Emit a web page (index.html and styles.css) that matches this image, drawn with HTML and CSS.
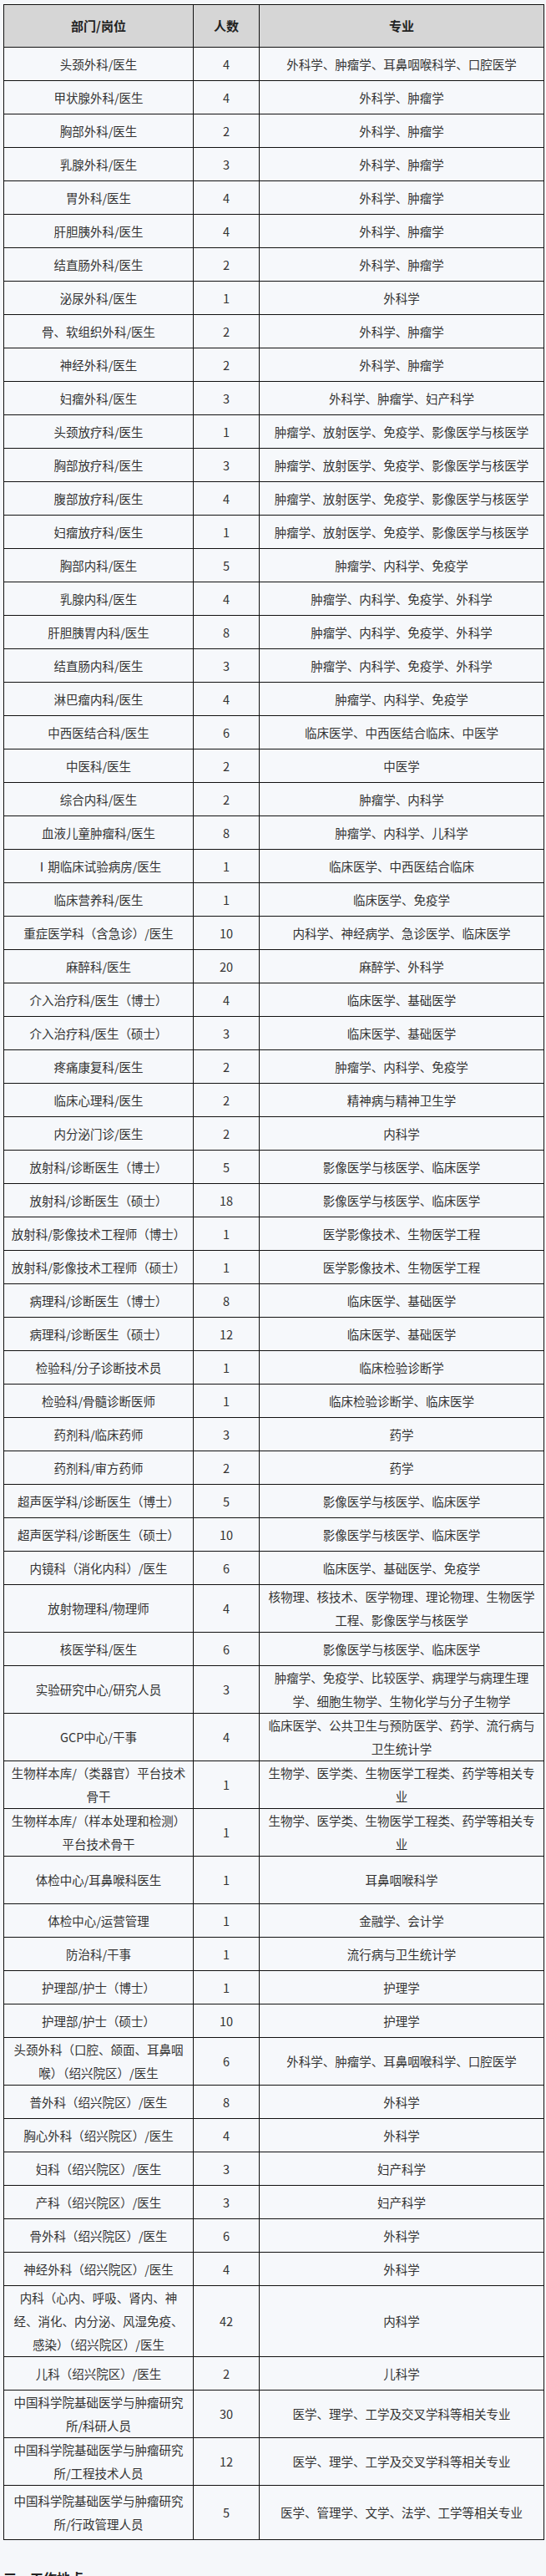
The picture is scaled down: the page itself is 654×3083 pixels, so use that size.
FILE: index.html
```html
<!DOCTYPE html>
<html lang="zh-CN">
<head>
<meta charset="utf-8">
<title>招聘岗位</title>
<link rel="stylesheet" href="styles.css">
</head>
<body>
<div class="page">
<table class="jobs">
<colgroup><col class="c1"><col class="c2"><col class="c3"></colgroup>
<thead>
<tr><th>部门/岗位</th><th>人数</th><th>专业</th></tr>
</thead>
<tbody>
<tr><td>头颈外科/医生</td><td>4</td><td>外科学、肿瘤学、耳鼻咽喉科学、口腔医学</td></tr>
<tr><td>甲状腺外科/医生</td><td>4</td><td>外科学、肿瘤学</td></tr>
<tr><td>胸部外科/医生</td><td>2</td><td>外科学、肿瘤学</td></tr>
<tr><td>乳腺外科/医生</td><td>3</td><td>外科学、肿瘤学</td></tr>
<tr><td>胃外科/医生</td><td>4</td><td>外科学、肿瘤学</td></tr>
<tr><td>肝胆胰外科/医生</td><td>4</td><td>外科学、肿瘤学</td></tr>
<tr><td>结直肠外科/医生</td><td>2</td><td>外科学、肿瘤学</td></tr>
<tr><td>泌尿外科/医生</td><td>1</td><td>外科学</td></tr>
<tr><td>骨、软组织外科/医生</td><td>2</td><td>外科学、肿瘤学</td></tr>
<tr><td>神经外科/医生</td><td>2</td><td>外科学、肿瘤学</td></tr>
<tr><td>妇瘤外科/医生</td><td>3</td><td>外科学、肿瘤学、妇产科学</td></tr>
<tr><td>头颈放疗科/医生</td><td>1</td><td>肿瘤学、放射医学、免疫学、影像医学与核医学</td></tr>
<tr><td>胸部放疗科/医生</td><td>3</td><td>肿瘤学、放射医学、免疫学、影像医学与核医学</td></tr>
<tr><td>腹部放疗科/医生</td><td>4</td><td>肿瘤学、放射医学、免疫学、影像医学与核医学</td></tr>
<tr><td>妇瘤放疗科/医生</td><td>1</td><td>肿瘤学、放射医学、免疫学、影像医学与核医学</td></tr>
<tr><td>胸部内科/医生</td><td>5</td><td>肿瘤学、内科学、免疫学</td></tr>
<tr><td>乳腺内科/医生</td><td>4</td><td>肿瘤学、内科学、免疫学、外科学</td></tr>
<tr><td>肝胆胰胃内科/医生</td><td>8</td><td>肿瘤学、内科学、免疫学、外科学</td></tr>
<tr><td>结直肠内科/医生</td><td>3</td><td>肿瘤学、内科学、免疫学、外科学</td></tr>
<tr><td>淋巴瘤内科/医生</td><td>4</td><td>肿瘤学、内科学、免疫学</td></tr>
<tr><td>中西医结合科/医生</td><td>6</td><td>临床医学、中西医结合临床、中医学</td></tr>
<tr><td>中医科/医生</td><td>2</td><td>中医学</td></tr>
<tr><td>综合内科/医生</td><td>2</td><td>肿瘤学、内科学</td></tr>
<tr><td>血液儿童肿瘤科/医生</td><td>8</td><td>肿瘤学、内科学、儿科学</td></tr>
<tr><td>Ⅰ期临床试验病房/医生</td><td>1</td><td>临床医学、中西医结合临床</td></tr>
<tr><td>临床营养科/医生</td><td>1</td><td>临床医学、免疫学</td></tr>
<tr><td>重症医学科（含急诊）/医生</td><td>10</td><td>内科学、神经病学、急诊医学、临床医学</td></tr>
<tr><td>麻醉科/医生</td><td>20</td><td>麻醉学、外科学</td></tr>
<tr><td>介入治疗科/医生（博士）</td><td>4</td><td>临床医学、基础医学</td></tr>
<tr><td>介入治疗科/医生（硕士）</td><td>3</td><td>临床医学、基础医学</td></tr>
<tr><td>疼痛康复科/医生</td><td>2</td><td>肿瘤学、内科学、免疫学</td></tr>
<tr><td>临床心理科/医生</td><td>2</td><td>精神病与精神卫生学</td></tr>
<tr><td>内分泌门诊/医生</td><td>2</td><td>内科学</td></tr>
<tr><td>放射科/诊断医生（博士）</td><td>5</td><td>影像医学与核医学、临床医学</td></tr>
<tr><td>放射科/诊断医生（硕士）</td><td>18</td><td>影像医学与核医学、临床医学</td></tr>
<tr><td>放射科/影像技术工程师（博士）</td><td>1</td><td>医学影像技术、生物医学工程</td></tr>
<tr><td>放射科/影像技术工程师（硕士）</td><td>1</td><td>医学影像技术、生物医学工程</td></tr>
<tr><td>病理科/诊断医生（博士）</td><td>8</td><td>临床医学、基础医学</td></tr>
<tr><td>病理科/诊断医生（硕士）</td><td>12</td><td>临床医学、基础医学</td></tr>
<tr><td>检验科/分子诊断技术员</td><td>1</td><td>临床检验诊断学</td></tr>
<tr><td>检验科/骨髓诊断医师</td><td>1</td><td>临床检验诊断学、临床医学</td></tr>
<tr><td>药剂科/临床药师</td><td>3</td><td>药学</td></tr>
<tr><td>药剂科/审方药师</td><td>2</td><td>药学</td></tr>
<tr><td>超声医学科/诊断医生（博士）</td><td>5</td><td>影像医学与核医学、临床医学</td></tr>
<tr><td>超声医学科/诊断医生（硕士）</td><td>10</td><td>影像医学与核医学、临床医学</td></tr>
<tr><td>内镜科（消化内科）/医生</td><td>6</td><td>临床医学、基础医学、免疫学</td></tr>
<tr><td>放射物理科/物理师</td><td>4</td><td>核物理、核技术、医学物理、理论物理、生物医学工程、影像医学与核医学</td></tr>
<tr><td>核医学科/医生</td><td>6</td><td>影像医学与核医学、临床医学</td></tr>
<tr><td>实验研究中心/研究人员</td><td>3</td><td>肿瘤学、免疫学、比较医学、病理学与病理生理学、细胞生物学、生物化学与分子生物学</td></tr>
<tr><td>GCP中心/干事</td><td>4</td><td>临床医学、公共卫生与预防医学、药学、流行病与卫生统计学</td></tr>
<tr><td>生物样本库/（类器官）平台技术骨干</td><td>1</td><td>生物学、医学类、生物医学工程类、药学等相关专业</td></tr>
<tr><td>生物样本库/（样本处理和检测）平台技术骨干</td><td>1</td><td>生物学、医学类、生物医学工程类、药学等相关专业</td></tr>
<tr class="tall"><td>体检中心/耳鼻喉科医生</td><td>1</td><td>耳鼻咽喉科学</td></tr>
<tr><td>体检中心/运营管理</td><td>1</td><td>金融学、会计学</td></tr>
<tr><td>防治科/干事</td><td>1</td><td>流行病与卫生统计学</td></tr>
<tr><td>护理部/护士（博士）</td><td>1</td><td>护理学</td></tr>
<tr><td>护理部/护士（硕士）</td><td>10</td><td>护理学</td></tr>
<tr><td>头颈外科（口腔、颌面、耳鼻咽喉）（绍兴院区）/医生</td><td>6</td><td>外科学、肿瘤学、耳鼻咽喉科学、口腔医学</td></tr>
<tr><td>普外科（绍兴院区）/医生</td><td>8</td><td>外科学</td></tr>
<tr><td>胸心外科（绍兴院区）/医生</td><td>4</td><td>外科学</td></tr>
<tr><td>妇科（绍兴院区）/医生</td><td>3</td><td>妇产科学</td></tr>
<tr><td>产科（绍兴院区）/医生</td><td>3</td><td>妇产科学</td></tr>
<tr><td>骨外科（绍兴院区）/医生</td><td>6</td><td>外科学</td></tr>
<tr><td>神经外科（绍兴院区）/医生</td><td>4</td><td>外科学</td></tr>
<tr><td>内科（心内、呼吸、肾内、神经、消化、内分泌、风湿免疫、感染）（绍兴院区）/医生</td><td>42</td><td>内科学</td></tr>
<tr><td>儿科（绍兴院区）/医生</td><td>2</td><td>儿科学</td></tr>
<tr><td>中国科学院基础医学与肿瘤研究所/科研人员</td><td>30</td><td>医学、理学、工学及交叉学科等相关专业</td></tr>
<tr><td>中国科学院基础医学与肿瘤研究所/工程技术人员</td><td>12</td><td>医学、理学、工学及交叉学科等相关专业</td></tr>
<tr class="last"><td>中国科学院基础医学与肿瘤研究所/行政管理人员</td><td>5</td><td>医学、管理学、文学、法学、工学等相关专业</td></tr>
</tbody>
</table>
<h2 class="section">三、工作地点</h2>
</div>
</body>
</html>
```

FILE: styles.css
```css
html, body {
  margin: 0;
  padding: 0;
  background: #f5f7fa;
}

body {
  font-family: "Noto Sans CJK SC", "Noto Sans", sans-serif;
  color: #333;
}

.page {
  padding: 5px 3px 0 4px;
}

.jobs {
  width: 647px;
  border-collapse: collapse;
  table-layout: fixed;
  font-size: 14.5px;
  line-height: 28px;
}

.c1 { width: 227px; }
.c2 { width: 79px; }
.c3 { width: 341px; }

.jobs th,
.jobs td {
  border: 1px solid #111;
  text-align: center;
  vertical-align: middle;
  padding: 0 6px;
}

.jobs th {
  height: 50px;
  background: #d6d6d6;
  font-weight: bold;
  font-size: 15px;
  color: #222;
}

.jobs td {
  background: #f6f8fb;
}

.jobs tbody tr {
  height: 40px;
}

.jobs tbody tr.tall {
  height: 57px;
}

.jobs tbody tr.last {
  height: 65px;
}

.section {
  margin: 33px 0 0 0;
  font-size: 16px;
  font-weight: bold;
  color: #222;
  line-height: 24px;
}
```
